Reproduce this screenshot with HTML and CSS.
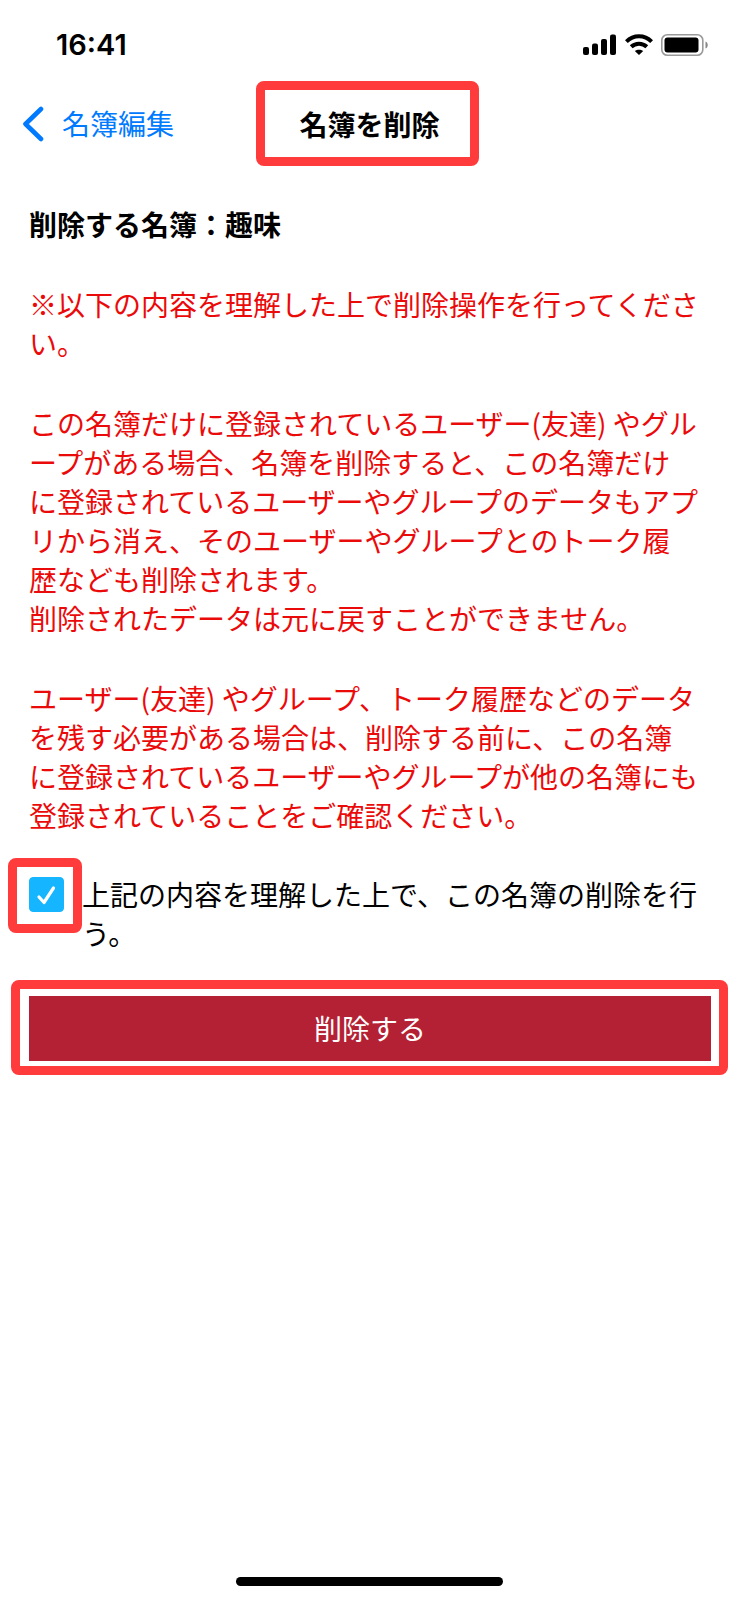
FILE: index.html
```html
<!DOCTYPE html>
<html lang="ja">

<head>
    <meta charset="UTF-8">
    <meta name="viewport" content="width=device-width, initial-scale=1">
    <title>名簿を削除</title>
    <link rel="stylesheet" href="styles.css">
</head>

<body>

    <div class="status-bar">
        <span class="time">16:41</span>
        <div class="status-icons">
            <svg width="34" height="22" viewBox="0 0 34 22">
                <rect x="0" y="13" width="6" height="8" rx="2"/>
                <rect x="9" y="9.5" width="6" height="11.5" rx="2"/>
                <rect x="18" y="5" width="6" height="16" rx="2"/>
                <rect x="27" y="0.5" width="6" height="20.5" rx="2"/>
            </svg>
            <svg width="28" height="22" viewBox="0 0 28 22">
                <g fill="none" stroke="#000" stroke-width="4">
                    <path d="M1.4 7.6C8.5 0.6 19.5 0.6 26.6 7.6"/>
                    <path d="M6.2 12.8C10.6 8.6 17.4 8.6 21.8 12.8"/>
                </g>
                <path d="M14 21L9.8 17C12.2 15.2 15.8 15.2 18.2 17Z"/>
            </svg>
            <svg width="48" height="22" viewBox="0 0 48 22">
                <rect x="0.8" y="0.8" width="41" height="20.4" rx="5.5" fill="none" stroke="#999" stroke-width="1.6"/>
                <rect x="3.5" y="3.5" width="34" height="15" rx="3"/>
                <path d="M44.5 7.5C47.5 8.5 47.5 13.5 44.5 14.5Z" fill="#888"/>
            </svg>
        </div>
    </div>

    <header class="nav">
        <a href="#" class="back">
            <svg width="22" height="36" viewBox="0 0 22 36">
                <path d="M19 3L3.5 18L19 33" fill="none" stroke="#007aff" stroke-width="4.6" stroke-linecap="round" stroke-linejoin="round"/>
            </svg>
            名簿編集
        </a>
        <h1 class="title highlight">名簿を削除</h1>
    </header>

    <main>
        <h2>削除する名簿：趣味</h2>

        <div class="warning">
            <p>※以下の内容を理解した上で削除操作を行ってくださ<br>い。</p>
            <p>この名簿だけに登録されているユーザー(友達) やグル<br>ープがある場合、名簿を削除すると、この名簿だけ<br>に登録されているユーザーやグループのデータもアプ<br>リから消え、そのユーザーやグループとのトーク履<br>歴なども削除されます。<br>削除されたデータは元に戻すことができません。</p>
            <p>ユーザー(友達) やグループ、トーク履歴などのデータ<br>を残す必要がある場合は、削除する前に、この名簿<br>に登録されているユーザーやグループが他の名簿にも<br>登録されていることをご確認ください。</p>
        </div>

        <div class="agree">
            <span class="check highlight">
                <input type="checkbox" id="agree" checked>
                <svg width="35" height="35" viewBox="0 0 35 35">
                    <path d="M10 20L15 25.5L24.5 11" fill="none" stroke="#fff" stroke-width="3.2" stroke-linecap="round" stroke-linejoin="round"/>
                </svg>
            </span>
            <label for="agree">上記の内容を理解した上で、この名簿の削除を行<br>う。</label>
        </div>

        <div class="action highlight">
            <button type="button">削除する</button>
        </div>
    </main>

    <div class="home-indicator"></div>

</body>

</html>
```
FILE: styles.css
```css
* {
    box-sizing: border-box;
}

body {
    margin: 0;
    min-height: 100vh;
    display: flex;
    flex-direction: column;
    background: #fff;
    color: #000;
    font-family: "Noto Sans CJK JP", sans-serif;
    font-size: 28px;
    line-height: 39px;
}

h1,
h2,
p {
    margin: 0;
    font-size: 28px;
}

.highlight {
    border: 9px solid #ff3b3b;
    border-radius: 8px;
}

.status-bar {
    display: flex;
    justify-content: space-between;
    align-items: center;
    height: 81px;
    padding: 8px 30px 0 56px;
}

.time {
    font-family: Inter, sans-serif;
    font-size: 29px;
    font-weight: 600;
}

.status-icons {
    display: flex;
    gap: 8px;
}

.nav {
    display: grid;
    grid-template-columns: 1fr auto 1fr;
    align-items: center;
    padding: 0 26px 0 22px;
}

.back {
    display: flex;
    align-items: center;
    gap: 18px;
    color: #007aff;
    text-decoration: none;
}

.title {
    padding: 15px 30px 13px 34px;
    font-weight: bold;
}

main {
    padding: 39px 28px 0 29px;
}

h2 {
    font-weight: bold;
}

.warning {
    display: flex;
    flex-direction: column;
    gap: 41px;
    margin-top: 41px;
    color: #eb0a0a;
    white-space: nowrap;
}

.agree {
    display: flex;
    align-items: flex-start;
    margin: 23px 0 0 -21px;
}

.agree label {
    padding-top: 17px;
    white-space: nowrap;
}

.check {
    display: grid;
    padding: 10px 9px 12px 12px;
}

.check input,
.check svg {
    grid-area: 1 / 1;
}

.check input {
    appearance: none;
    width: 35px;
    height: 35px;
    margin: 0;
    border: 1px solid #16b5ff;
    border-radius: 4px;
}

.check input:checked {
    background: #16b5ff;
}

.check svg {
    pointer-events: none;
}

.action {
    margin: 27px -17px 0 -18px;
    padding: 7px 8px 5px 9px;
}

.action button {
    display: block;
    width: 100%;
    height: 65px;
    border: none;
    background: #b52134;
    color: #fff;
    font: inherit;
    cursor: pointer;
}

.home-indicator {
    width: 36%;
    height: 9px;
    margin: auto auto 14px;
    border-radius: 5px;
    background: #000;
}
```
